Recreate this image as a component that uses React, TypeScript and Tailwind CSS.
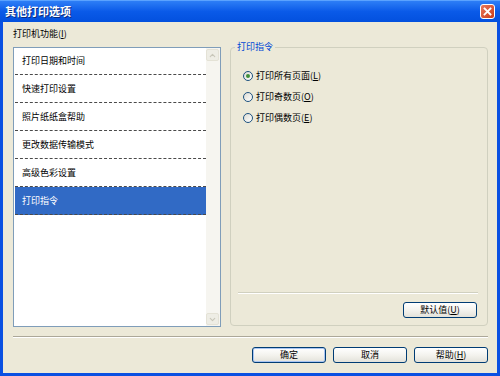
import { ChevronUp, ChevronDown } from "lucide-react";

const items = ["打印日期和时间", "快速打印设置", "照片纸纸盒帮助", "更改数据传输模式", "高级色彩设置", "打印指令"];

const Mn = ({ k }: { k: string }) => (
    <span>(<span className="underline underline-offset-1">{k}</span>)</span>
);

const Radio = ({ label, k, checked }: { label: string; k: string; checked?: boolean }) => (
    <div className="flex items-center h-[21px]">
        <span className="w-[10px] h-[10px] rounded-full border border-[#1C5180] bg-gradient-to-br from-[#DCDBD3] to-white flex items-center justify-center">
            {checked && <span className="w-[4px] h-[4px] rounded-full bg-[#3F8F3A]" />}
        </span>
        <span className="ml-[3px]">{label}<Mn k={k} /></span>
    </div>
);

const Btn = ({ children, main }: { children: React.ReactNode; main?: boolean }) => (
    <button
        className={
            "w-[74px] h-[16px] rounded-[3px] border border-[#003C74] bg-gradient-to-b from-white via-[#F4F3EE] to-[#E3E2DA] text-[9px] leading-[14px] text-black " +
            (main ? "shadow-[inset_0_0_0_1px_#A9C5F2]" : "")
        }
    >
        {children}
    </button>
);

const App = () => {
    return (
        <div className="w-[500px] h-[376px] flex flex-col bg-[#0A50E2] font-['Noto_Sans_CJK_SC',sans-serif] text-[9px] text-black select-none">
            {/* title bar */}
            <div className="h-[22px] flex items-center px-[5px] bg-gradient-to-b from-[#2D7EF6] via-[#0A5AE8] to-[#0350DE] border-t border-[#5AA2FF]">
                <span className="text-white font-bold text-[11px] leading-none [text-shadow:1px_1px_0_#0A2A7A]">其他打印选项</span>
                <div className="ml-auto w-[15px] h-[15px] rounded-[3px] border border-white bg-gradient-to-br from-[#E8775A] to-[#C93A16] flex items-center justify-center">
                    <svg width="9" height="9" viewBox="0 0 9 9">
                        <path d="M1.5 1.5 L7.5 7.5 M7.5 1.5 L1.5 7.5" stroke="white" strokeWidth="1.8" strokeLinecap="square" />
                    </svg>
                </div>
            </div>

            {/* body */}
            <div className="mx-[3px] mb-[3px] flex-1 bg-[#ECE9D8] pt-[5px] pl-[10px] pr-[9px] flex flex-col">
                <div className="flex gap-[9px]">
                    <div className="w-[208px] flex flex-col">
                        <div className="h-[14px] leading-[14px]">打印机功能<Mn k="I" /></div>
                        <div className="mt-[6px] h-[280px] border border-[#7F9DB9] bg-white flex">
                            <div className="flex-1 pl-[1px]">
                                {items.map((t, i) => (
                                    <div
                                        key={t}
                                        className={
                                            "flex items-center pl-[7px] border-b border-dashed border-[#4A4A4A] " +
                                            (i === 0 ? "h-[27px] " : "h-[28px] ") +
                                            (i === items.length - 1 ? "bg-[#316AC5] text-white" : "")
                                        }
                                    >
                                        {t}
                                    </div>
                                ))}
                            </div>
                            <div className="w-[14px] bg-[#F6F5F0] flex flex-col justify-between py-[1px] pr-[1px]">
                                <div className="h-[12px] rounded-[2px] bg-[#EEEDE5] border border-[#E4E2D6] flex items-center justify-center">
                                    <ChevronUp size={9} strokeWidth={3} color="#C9C7BA" />
                                </div>
                                <div className="h-[12px] rounded-[2px] bg-[#EEEDE5] border border-[#E4E2D6] flex items-center justify-center">
                                    <ChevronDown size={9} strokeWidth={3} color="#C9C7BA" />
                                </div>
                            </div>
                        </div>
                    </div>

                    <fieldset className="mt-[15px] w-[258px] h-[284px] border border-[#D0D0BF] rounded-[4px]">
                        <legend className="ml-[4px] px-[2px] text-[#0046D5] leading-[10px]">打印指令</legend>
                        <div className="h-[273px] flex flex-col pt-[13px] pl-[7px] pr-[9px] pb-[7px]">
                            <div className="pl-[5px]">
                                <Radio label="打印所有页面" k="L" checked />
                                <Radio label="打印奇数页" k="O" />
                                <Radio label="打印偶数页" k="E" />
                            </div>
                            <div className="mt-auto border-t border-[#D0D0BF] border-b border-b-white" />
                            <div className="mt-[8px] flex justify-end pr-[1px]">
                                <Btn>默认值<Mn k="U" /></Btn>
                            </div>
                        </div>
                    </fieldset>
                </div>

                <div className="mt-[9px] border-t border-[#ACA899] border-b border-b-white" />

                <div className="mt-[9px] flex justify-end gap-[7px]">
                    <Btn main>确定</Btn>
                    <Btn>取消</Btn>
                    <Btn>帮助<Mn k="H" /></Btn>
                </div>
            </div>
        </div>
    );
};

export default App;
